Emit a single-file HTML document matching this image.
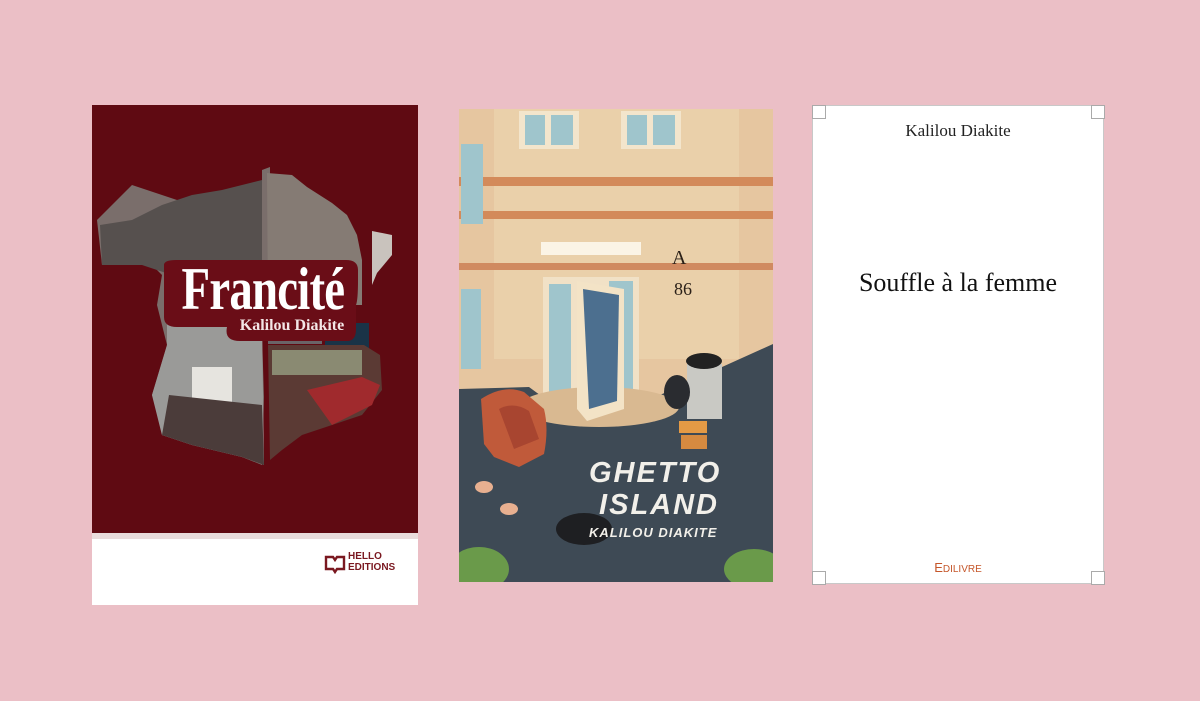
<!DOCTYPE html>
<html><head><meta charset="utf-8"><style>
body{margin:0;width:1200px;height:701px;background:#ebbfc6;position:relative;overflow:hidden;font-family:"Liberation Serif",serif}
.a{position:absolute}
</style></head><body>
<!-- Book 1 -->
<div class="a" style="left:92px;top:105px;width:326px;height:500px;background:#fff">
<svg width="326" height="500" style="position:absolute;left:0;top:0">
<rect x="0" y="0" width="326" height="428" fill="#5f0a12"/>
<rect x="0" y="428" width="326" height="6" fill="#e9dcdc"/>
<polygon points="170,65 178,62 178,225 160,228 150,200 120,190 105,160 85,155 70,150 90,120 100,100 70,90 40,80 20,100 5,115 10,160 40,155 60,160 70,170 65,200 75,240 60,290 70,330 100,340 150,352 170,360 172,292 170,230" fill="#7a6e6b"/>
<polygon points="70,100 100,90 130,85 170,75 170,170 80,170 50,160 10,160 8,120 40,115" fill="#56504e"/>
<polygon points="75,215 170,215 172,360 150,352 100,340 70,330 60,290 75,240" fill="#9a9a98"/>
<rect x="100" y="262" width="40" height="65" fill="#e6e4df"/>
<polygon points="77,290 170,300 172,360 150,352 100,340 70,330" fill="#4b3c3a"/>
<polygon points="175,68 200,70 215,82 240,98 255,110 265,130 270,155 270,200 228,200 200,210 176,205" fill="#857b74"/>
<polygon points="280,126 300,130 300,150 285,168 280,180" fill="#c9c3bd"/>
<rect x="176" y="205" width="54" height="34" fill="#6a6468"/>
<rect x="233" y="218" width="44" height="52" fill="#1a3347"/>
<polygon points="176,240 272,240 288,250 290,285 270,310 240,320 210,330 190,345 178,355" fill="#5b3a34"/>
<rect x="180" y="245" width="90" height="25" fill="#8a8a72"/>
<polygon points="215,285 270,272 288,280 280,300 240,320" fill="#a02a2d"/>
<path d="M72,160 L72,212 Q72,222 85,222 L135,222 Q132,236 148,236 L255,236 Q264,236 264,224 L264,200 Q266,195 266,175 L266,165 Q266,155 254,155 L84,155 Q72,155 72,160 Z" fill="#6a0d17"/>
</svg>
<div class="a" style="left:68px;top:150px;width:196px;text-align:center;font:bold 60px 'Liberation Serif',serif;color:#fff;letter-spacing:-1px;transform:scaleX(0.78);transform-origin:center">Francité</div>
<div class="a" style="left:138px;top:212px;width:124px;text-align:center;font:bold 16px 'Liberation Serif',serif;color:#f3e6e6">Kalilou Diakite</div>
<svg class="a" style="left:232px;top:449px" width="22" height="20"><path d="M2,3 L9,3 L11,6 L13,3 L20,3 L20,15 L13,15 L11,18 L9,15 L2,15 Z" fill="none" stroke="#7a1820" stroke-width="2.4"/></svg>
<div class="a" style="left:256px;top:446px;font:bold 10px 'Liberation Sans',sans-serif;color:#7a1820;line-height:11px">HELLO<br>EDITIONS</div>
</div>
<!-- Book 2 -->
<div class="a" style="left:459px;top:109px;width:314px;height:473px;background:#e7c7a2;overflow:hidden">
<svg width="314" height="473" style="position:absolute;left:0;top:0">
<rect x="0" y="0" width="314" height="473" fill="#e6c6a0"/>
<rect x="35" y="0" width="245" height="250" fill="#ead0aa"/>
<rect x="60" y="2" width="60" height="38" fill="#f3e5cc"/><rect x="66" y="6" width="20" height="30" fill="#9fc5cc"/><rect x="92" y="6" width="22" height="30" fill="#9fc5cc"/>
<rect x="162" y="2" width="60" height="38" fill="#f3e5cc"/><rect x="168" y="6" width="20" height="30" fill="#9fc5cc"/><rect x="194" y="6" width="22" height="30" fill="#9fc5cc"/>
<rect x="0" y="68" width="314" height="9" fill="#d38a5a"/>
<rect x="0" y="102" width="314" height="8" fill="#d38a5a"/>
<rect x="0" y="154" width="314" height="7" fill="#d08a60"/>
<rect x="2" y="35" width="22" height="80" fill="#9fc5cc"/>
<rect x="2" y="180" width="20" height="80" fill="#9fc5cc"/>
<rect x="82" y="133" width="100" height="13" fill="#fbf4e6"/>
<rect x="84" y="168" width="96" height="130" fill="#f1e1c6"/>
<rect x="90" y="175" width="22" height="112" fill="#9fc5cc"/>
<rect x="150" y="172" width="24" height="112" fill="#9fc5cc"/>
<polygon points="0,280 70,278 100,300 170,300 314,235 314,473 0,473" fill="#3e4a55"/>
<ellipse cx="140" cy="298" rx="80" ry="20" fill="#d9b991"/>
<polygon points="118,172 165,180 165,300 128,312 118,300" fill="#f3e3c6"/>
<polygon points="124,180 160,186 158,292 130,300" fill="#4c6f8f"/>
<path d="M22,290 Q45,275 65,283 L85,300 Q90,320 85,345 L60,358 L35,348 L25,335 Z" fill="#c05a3a"/>
<path d="M40,300 Q55,292 70,302 L80,330 L55,340 Z" fill="#a84530"/>
<rect x="228" y="255" width="35" height="55" fill="#c9c9c4"/><ellipse cx="245" cy="252" rx="18" ry="8" fill="#222"/>
<ellipse cx="218" cy="283" rx="13" ry="17" fill="#2a2c30"/>
<rect x="220" y="312" width="28" height="12" fill="#e49a45"/><rect x="222" y="326" width="26" height="14" fill="#d58a40"/>
<ellipse cx="125" cy="420" rx="28" ry="16" fill="#1e1f22"/>
<ellipse cx="20" cy="460" rx="30" ry="22" fill="#6a9a4a"/><ellipse cx="295" cy="460" rx="30" ry="20" fill="#6a9a4a"/>
<ellipse cx="25" cy="378" rx="9" ry="6" fill="#e8b090"/><ellipse cx="50" cy="400" rx="9" ry="6" fill="#e8b090"/>
</svg>
<div class="a" style="left:213px;top:138px;font:20px 'Liberation Serif',serif;color:#2b2018">A</div>
<div class="a" style="left:215px;top:170px;font:18px 'Liberation Serif',serif;color:#2b2018">86</div>
<div class="a" style="left:130px;top:348px;font:italic bold 29px 'Liberation Sans',sans-serif;color:#f2f0ea;line-height:32px;letter-spacing:2px">GHETTO<br>&nbsp;ISLAND</div>
<div class="a" style="left:130px;top:416px;font:italic bold 13px 'Liberation Sans',sans-serif;color:#f2f0ea;letter-spacing:1px">KALILOU DIAKITE</div>
</div>
<!-- Book 3 -->
<div class="a" style="left:812px;top:105px;width:290px;height:477px;background:#fff;border:1px solid #c8c8c8"></div>
<div class="a" style="left:812px;top:105px;width:12px;height:12px;border:1px solid #aaa;background:#fff"></div>
<div class="a" style="left:1091px;top:105px;width:12px;height:12px;border:1px solid #aaa;background:#fff"></div>
<div class="a" style="left:812px;top:571px;width:12px;height:12px;border:1px solid #aaa;background:#fff"></div>
<div class="a" style="left:1091px;top:571px;width:12px;height:12px;border:1px solid #aaa;background:#fff"></div>
<div class="a" style="left:812px;top:121px;width:292px;text-align:center;font:17px 'Liberation Serif',serif;color:#222">Kalilou Diakite</div>
<div class="a" style="left:812px;top:268px;width:292px;text-align:center;font:26px 'Liberation Serif',serif;color:#111">Souffle à la femme</div>
<div class="a" style="left:812px;top:560px;width:292px;text-align:center;font:13px 'Liberation Sans',sans-serif;color:#c5562a">E<span style="font-size:10px">DILIVRE</span></div>
</body></html>
